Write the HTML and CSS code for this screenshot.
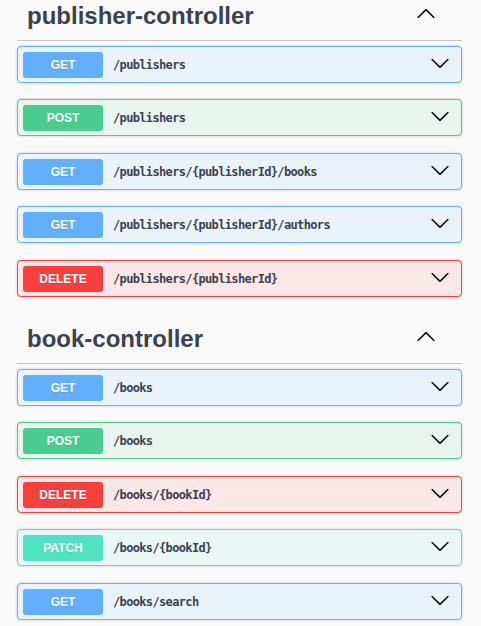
FILE: index.html
```html
<!DOCTYPE html>
<html lang="en">
<head>
<meta charset="utf-8">
<title>Swagger UI</title>
<link rel="stylesheet" href="styles.css">
</head>
<body>
<div class="page">
  <section class="tag-section">
    <h3 class="tag"><span class="tag-name">publisher-controller</span><svg class="arrow arrow-up" viewBox="0 0 20 20" width="20" height="20"><path d="M17.418 6.109c.272-.268.709-.268.979 0s.271.701 0 .969l-7.908 7.83c-.27.268-.707.268-.979 0l-7.908-7.83c-.27-.268-.27-.701 0-.969.271-.268.709-.268.979 0L10 13.25l7.418-7.141z"/></svg></h3>
    <div class="op op-get"><span class="method">GET</span><span class="path">/publishers</span><svg class="arrow" viewBox="0 0 20 20" width="20" height="20"><path d="M17.418 6.109c.272-.268.709-.268.979 0s.271.701 0 .969l-7.908 7.83c-.27.268-.707.268-.979 0l-7.908-7.830c-.27-.268-.27-.701 0-.969.271-.268.709-.268.979 0L10 13.25l7.418-7.141z"/></svg></div>
    <div class="op op-post"><span class="method">POST</span><span class="path">/publishers</span><svg class="arrow" viewBox="0 0 20 20" width="20" height="20"><path d="M17.418 6.109c.272-.268.709-.268.979 0s.271.701 0 .969l-7.908 7.83c-.27.268-.707.268-.979 0l-7.908-7.83c-.27-.268-.27-.701 0-.969.271-.268.709-.268.979 0L10 13.25l7.418-7.141z"/></svg></div>
    <div class="op op-get"><span class="method">GET</span><span class="path">/publishers/{publisherId}/books</span><svg class="arrow" viewBox="0 0 20 20" width="20" height="20"><path d="M17.418 6.109c.272-.268.709-.268.979 0s.271.701 0 .969l-7.908 7.83c-.27.268-.707.268-.979 0l-7.908-7.83c-.27-.268-.27-.701 0-.969.271-.268.709-.268.979 0L10 13.25l7.418-7.141z"/></svg></div>
    <div class="op op-get"><span class="method">GET</span><span class="path">/publishers/{publisherId}/authors</span><svg class="arrow" viewBox="0 0 20 20" width="20" height="20"><path d="M17.418 6.109c.272-.268.709-.268.979 0s.271.701 0 .969l-7.908 7.83c-.27.268-.707.268-.979 0l-7.908-7.83c-.27-.268-.27-.701 0-.969.271-.268.709-.268.979 0L10 13.25l7.418-7.141z"/></svg></div>
    <div class="op op-delete"><span class="method">DELETE</span><span class="path">/publishers/{publisherId}</span><svg class="arrow" viewBox="0 0 20 20" width="20" height="20"><path d="M17.418 6.109c.272-.268.709-.268.979 0s.271.701 0 .969l-7.908 7.83c-.27.268-.707.268-.979 0l-7.908-7.83c-.27-.268-.27-.701 0-.969.271-.268.709-.268.979 0L10 13.25l7.418-7.141z"/></svg></div>
  </section>
  <section class="tag-section">
    <h3 class="tag"><span class="tag-name">book-controller</span><svg class="arrow arrow-up" viewBox="0 0 20 20" width="20" height="20"><path d="M17.418 6.109c.272-.268.709-.268.979 0s.271.701 0 .969l-7.908 7.83c-.27.268-.707.268-.979 0l-7.908-7.83c-.27-.268-.27-.701 0-.969.271-.268.709-.268.979 0L10 13.25l7.418-7.141z"/></svg></h3>
    <div class="op op-get"><span class="method">GET</span><span class="path">/books</span><svg class="arrow" viewBox="0 0 20 20" width="20" height="20"><path d="M17.418 6.109c.272-.268.709-.268.979 0s.271.701 0 .969l-7.908 7.83c-.27.268-.707.268-.979 0l-7.908-7.83c-.27-.268-.27-.701 0-.969.271-.268.709-.268.979 0L10 13.25l7.418-7.141z"/></svg></div>
    <div class="op op-post"><span class="method">POST</span><span class="path">/books</span><svg class="arrow" viewBox="0 0 20 20" width="20" height="20"><path d="M17.418 6.109c.272-.268.709-.268.979 0s.271.701 0 .969l-7.908 7.83c-.27.268-.707.268-.979 0l-7.908-7.83c-.27-.268-.27-.701 0-.969.271-.268.709-.268.979 0L10 13.25l7.418-7.141z"/></svg></div>
    <div class="op op-delete"><span class="method">DELETE</span><span class="path">/books/{bookId}</span><svg class="arrow" viewBox="0 0 20 20" width="20" height="20"><path d="M17.418 6.109c.272-.268.709-.268.979 0s.271.701 0 .969l-7.908 7.83c-.27.268-.707.268-.979 0l-7.908-7.83c-.27-.268-.27-.701 0-.969.271-.268.709-.268.979 0L10 13.25l7.418-7.141z"/></svg></div>
    <div class="op op-patch"><span class="method">PATCH</span><span class="path">/books/{bookId}</span><svg class="arrow" viewBox="0 0 20 20" width="20" height="20"><path d="M17.418 6.109c.272-.268.709-.268.979 0s.271.701 0 .969l-7.908 7.83c-.27.268-.707.268-.979 0l-7.908-7.83c-.27-.268-.27-.701 0-.969.271-.268.709-.268.979 0L10 13.25l7.418-7.141z"/></svg></div>
    <div class="op op-get"><span class="method">GET</span><span class="path">/books/search</span><svg class="arrow" viewBox="0 0 20 20" width="20" height="20"><path d="M17.418 6.109c.272-.268.709-.268.979 0s.271.701 0 .969l-7.908 7.83c-.27.268-.707.268-.979 0l-7.908-7.83c-.27-.268-.27-.701 0-.969.271-.268.709-.268.979 0L10 13.25l7.418-7.141z"/></svg></div>
  </section>
</div>
</body>
</html>
```

FILE: styles.css
```css
* { box-sizing: border-box; }

html, body {
  margin: 0;
  padding: 0;
  background: #fafafa;
  overflow: hidden;
}

body {
  font-family: "Liberation Sans", Arial, sans-serif;
  color: #3b4151;
}

.page {
  margin-top: -10px;
  padding: 0 19px 0 17px;
}

.tag {
  display: flex;
  align-items: center;
  margin: 0 0 5px;
  padding: 12px 26px 10px 10px;
  height: 51px;
  border-bottom: 1px solid rgba(59, 65, 81, 0.3);
  font-size: 24px;
  line-height: 28px;
  font-weight: 700;
  color: #3b4151;
}

.tag-name {
  flex: 1;
}

.arrow {
  flex: none;
  width: 20px;
  height: 20px;
  fill: #000;
  margin-bottom: 4px;
}

.arrow-up {
  transform: rotate(180deg);
}

.op {
  display: flex;
  align-items: center;
  height: 37px;
  padding: 5px 5px 4px;
  margin-bottom: 16.4px;
  border: 1px solid;
  border-radius: 4px;
  box-shadow: 0 0 3px rgba(0, 0, 0, 0.19);
}

.op .arrow {
  margin-right: 6px;
}

.method {
  flex: none;
  width: 80px;
  height: 26px;
  display: flex;
  align-items: center;
  justify-content: center;
  border-radius: 3px;
  color: #fff;
  font-family: "Liberation Sans", Arial, sans-serif;
  font-size: 12px;
  font-weight: 700;
  text-shadow: 0 1px 0 rgba(0, 0, 0, 0.1);
}

.path {
  flex: 1;
  padding: 0 10px;
  font-family: "DejaVu Sans Mono", "Liberation Mono", monospace;
  font-size: 12px;
  letter-spacing: -0.65px;
  font-weight: 700;
  color: #3b4151;
}

.op-get { background: #ebf3fa; border-color: #61affe; }
.op-get .method { background: #61affe; }

.op-post { background: #e8f5ef; border-color: #49cc90; }
.op-post .method { background: #49cc90; }

.op-delete { background: #fae7e7; border-color: #f93e3e; }
.op-delete .method { background: #f93e3e; }

.op-patch { background: #e9f8f4; border-color: #50e3c2; }
.op-patch .method { background: #50e3c2; }
```
